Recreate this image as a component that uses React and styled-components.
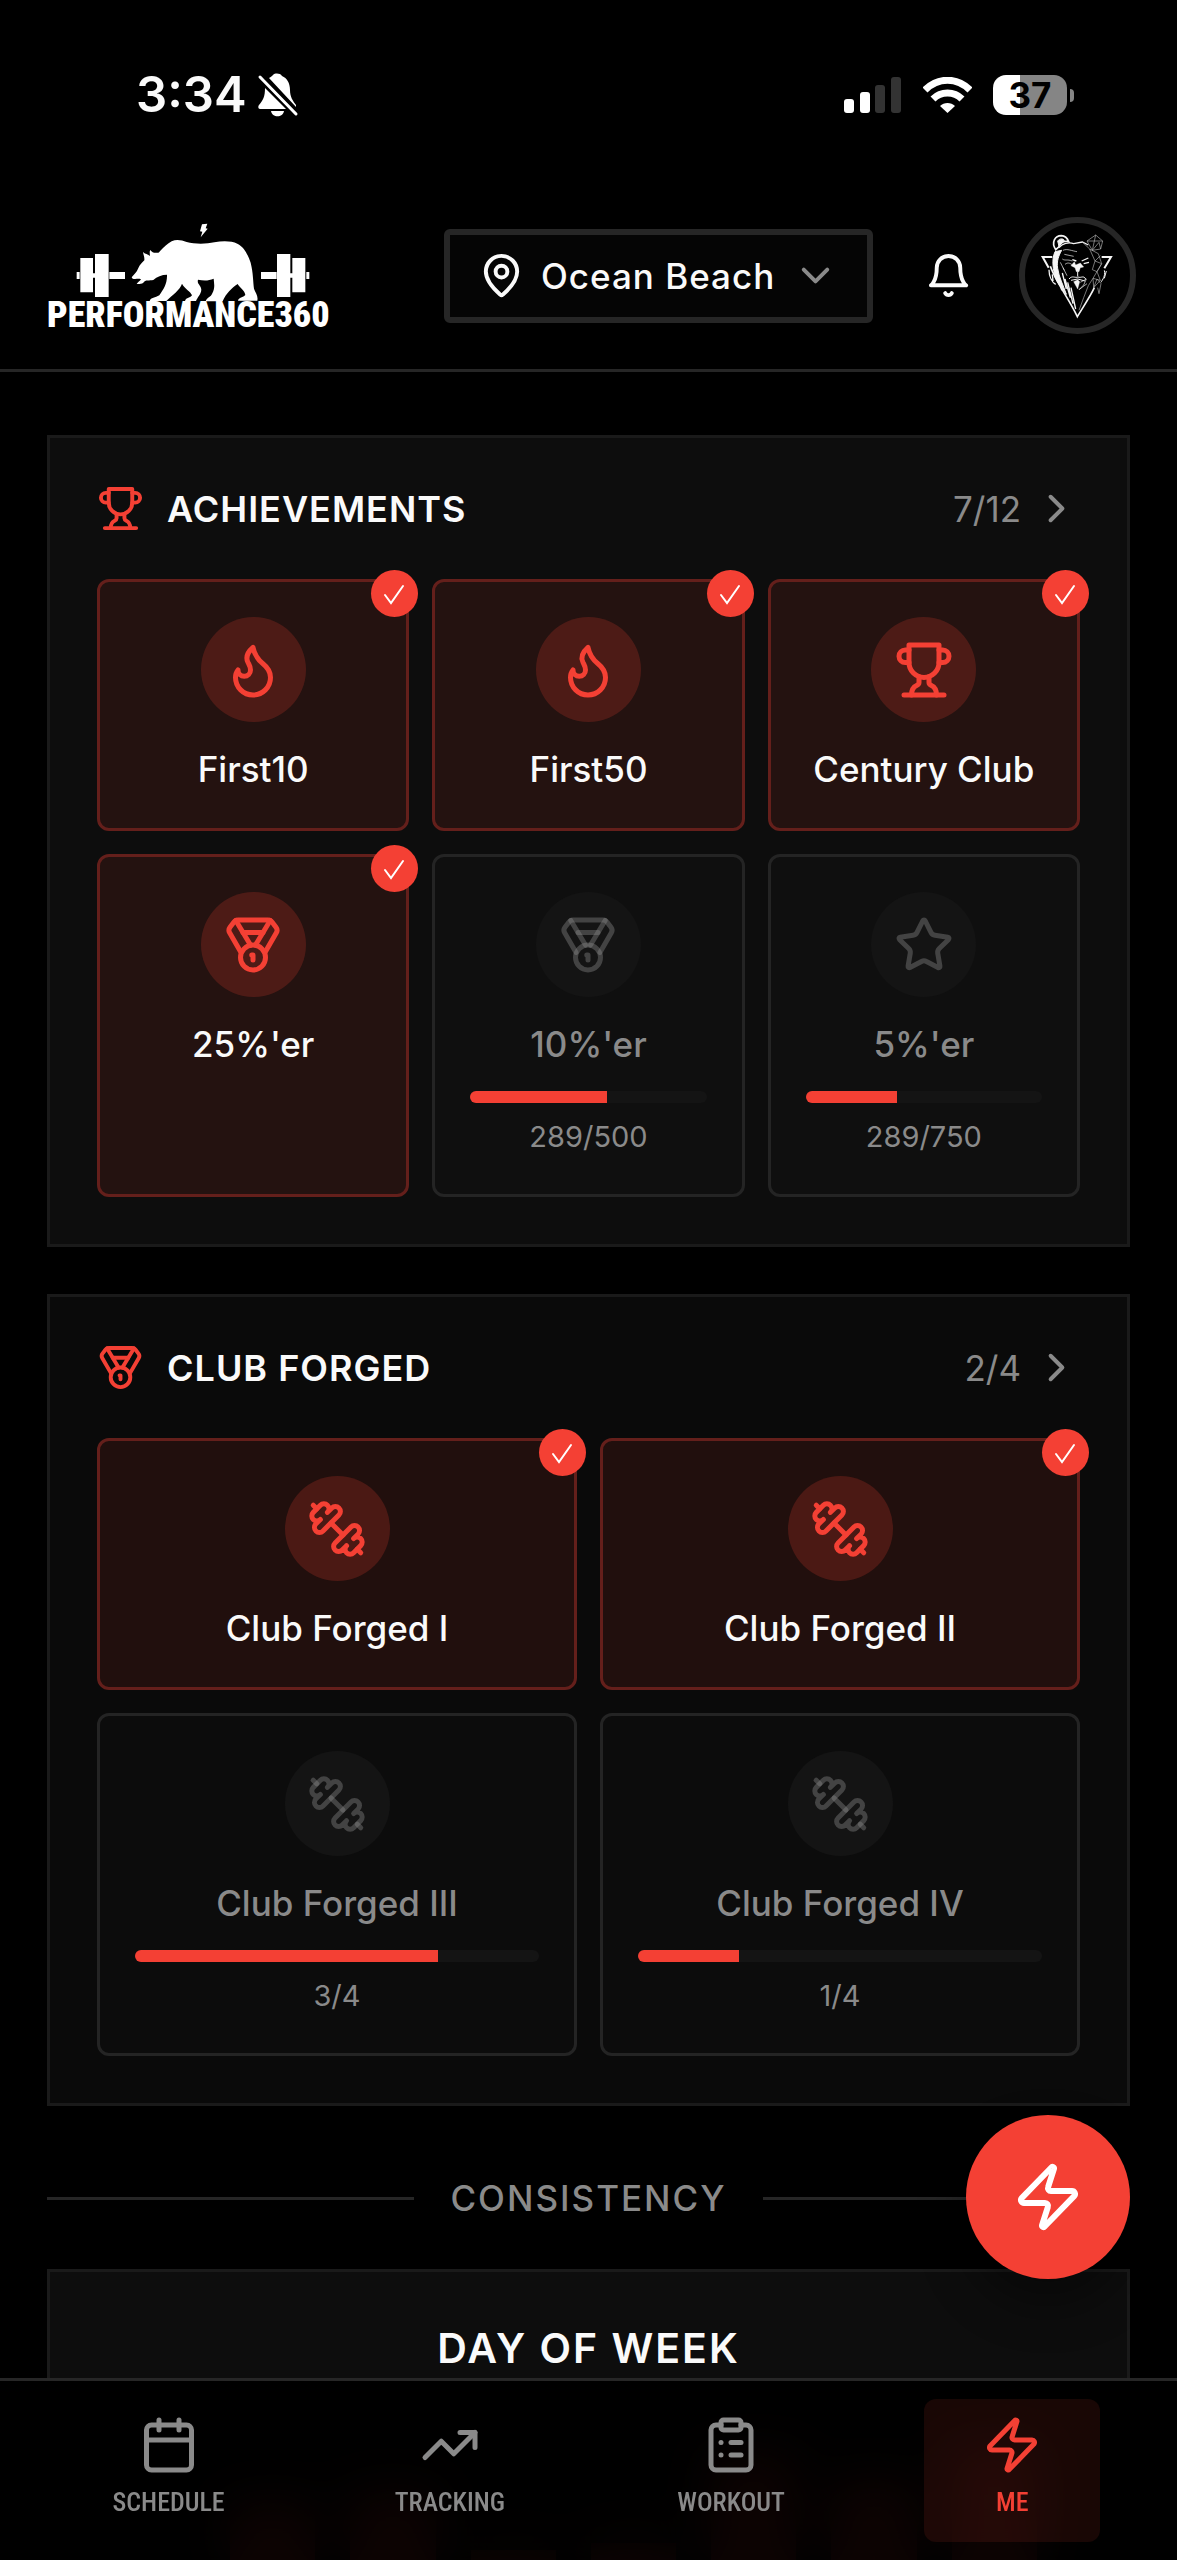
// Modules Import
import React from 'react';
import styled, { createGlobalStyle } from "styled-components"


const GlobalStyle = createGlobalStyle`
  * {
    box-sizing: border-box;
  }
  body {
    margin: 0;
    background-color: #000000;
    color: #fafafa;
    font-family: Inter, "Noto Sans", sans-serif;
  }
  button, select {
    font: inherit;
    color: inherit;
    background: none;
    border: 0;
    padding: 0;
    margin: 0;
  }
`

const Screen = styled.div`
  display: flex;
  flex-direction: column;
  height: 100vh;
  overflow: hidden;
`

/* Status bar */
const StatusBar = styled.div`
  display: flex;
  justify-content: space-between;
  align-items: center;
  height: 190px;
  padding: 0 103px 0 136px;
`
const StatusGroup = styled.div`
  display: flex;
  align-items: center;
  gap: ${props => props.$gap}px;
`
const Clock = styled.span`
  font-size: 49px;
  font-weight: 600;
  line-height: 60px;
`
const Battery = styled.div`
  display: flex;
  align-items: center;
  gap: 3px;
`
const BatteryBody = styled.div`
  display: flex;
  align-items: center;
  justify-content: center;
  width: 74px;
  height: 40px;
  border-radius: 13px;
  background: linear-gradient(to right, #ffffff 37%, #858585 37%);
  color: #000000;
  font-size: 35px;
  font-weight: 700;
`
const BatteryTip = styled.div`
  width: 4px;
  height: 13px;
  border-radius: 0 4px 4px 0;
  background-color: #858585;
`

/* Header */
const Header = styled.header`
  flex: none;
  border-bottom: 3px solid #262626;
`
const HeaderRow = styled.div`
  display: flex;
  justify-content: space-between;
  align-items: center;
  padding: 27px 41px 35px 47px;
`
const HeaderActions = styled.div`
  display: flex;
  align-items: center;
  gap: 47px;
`
const Logo = styled.a`
  display: flex;
  flex-direction: column;
  color: #ffffff;
  text-decoration: none;
`
const LogoName = styled.span`
  font-family: "Roboto Condensed", "Liberation Sans Narrow", sans-serif;
  font-size: 36px;
  font-weight: 900;
  line-height: 26px;
`
const LocationPicker = styled.label`
  display: flex;
  align-items: center;
  gap: 16px;
  height: 94px;
  margin-right: 5px;
  padding: 0 28px;
  border: 6px solid #262626;
  border-radius: 6px;
  background-color: #050505;
`
const LocationSelect = styled.select`
  appearance: none;
  font-size: 35px;
  font-weight: 500;
  letter-spacing: 1px;
  outline: none;
`
const IconButton = styled.button`
  display: flex;
`
const Avatar = styled.button`
  display: flex;
  width: 117px;
  height: 117px;
  border: 6px solid #262626;
  border-radius: 50%;
`

/* Content */
const Main = styled.main`
  display: flex;
  flex-direction: column;
  padding: 63px 47px 0;
`
const Card = styled.section`
  flex: none;
  margin-bottom: 47px;
  padding: 47px;
  border: 3px solid #1a1a1a;
  background-color: ${props => props.$dim ? "#0a0a0a" : "#0d0d0d"};
`
const CardHeader = styled.div`
  display: flex;
  align-items: center;
  height: 47px;
  margin-bottom: 47px;
`
const CardTitle = styled.h2`
  flex: 1;
  margin: 0 0 0 23px;
  font-size: 36px;
  font-weight: 600;
  letter-spacing: 1px;
`
const CardCount = styled.button`
  display: flex;
  align-items: center;
  gap: 12px;
  color: #8a8a8a;
  font-size: 35px;
`
const TileGrid = styled.div`
  display: grid;
  grid-template-columns: repeat(${props => props.$columns}, 1fr);
  gap: 23px;
`
const Tile = styled.div`
  position: relative;
  display: flex;
  flex-direction: column;
  align-items: center;
  padding: 35px;
  border: 3px solid ${props => props.$earned ? "#641f1b" : "#242424"};
  border-radius: 12px;
  background-color: ${props => props.$earned ? "rgba(244, 64, 52, 0.1)" : "rgba(255, 255, 255, 0.01)"};
`
const TileIcon = styled.div`
  display: flex;
  align-items: center;
  justify-content: center;
  width: 105px;
  height: 105px;
  border-radius: 50%;
  color: ${props => props.$earned ? "#f44034" : "rgba(138, 138, 138, 0.4)"};
  background-color: ${props => props.$earned ? "rgba(244, 64, 52, 0.2)" : "#141414"};
`
const TileName = styled.div`
  margin-top: 23px;
  color: ${props => props.$earned ? "#fafafa" : "#8a8a8a"};
  font-size: 35px;
  font-weight: 500;
  line-height: 48px;
`
const Track = styled.div`
  width: 100%;
  height: 12px;
  margin-top: 23px;
  border-radius: 6px;
  background-color: #141414;
  overflow: hidden;
`
const Fill = styled.div`
  height: 100%;
  background-color: #f44034;
`
const TileCount = styled.div`
  margin-top: 12px;
  color: #8a8a8a;
  font-size: 29px;
  line-height: 44px;
`
const Badge = styled.div`
  position: absolute;
  top: -12px;
  right: -12px;
  display: flex;
  width: 47px;
  height: 47px;
  border-radius: 50%;
  background-color: #f44034;
`
const Divider = styled.div`
  display: flex;
  align-items: center;
  gap: 36px;
  margin: 21px 0 47px;
  color: #8a8a8a;
  font-size: 35px;
  font-weight: 500;
  line-height: 48px;
  letter-spacing: 2px;

  &::before, &::after {
    content: "";
    flex: 1;
    height: 3px;
    background-color: #262626;
  }
`
const ChartTitle = styled.h3`
  margin: 0;
  text-align: center;
  font-size: 41px;
  font-weight: 600;
  line-height: 58px;
  letter-spacing: 2px;
`
const Chart = styled.div`
  display: flex;
  align-items: flex-end;
  gap: 35px;
  height: 360px;
  padding: 0 43px 0 133px;
`
const ChartBar = styled.div`
  flex: 1;
  background-color: #f44034;
`

/* Floating action + bottom tabs */
const QuickAction = styled.button`
  position: fixed;
  right: 47px;
  bottom: 281px;
  display: flex;
  align-items: center;
  justify-content: center;
  width: 164px;
  height: 164px;
  border-radius: 50%;
  background-color: #f44034;
  color: #ffffff;
  box-shadow: 0 24px 48px rgba(0, 0, 0, 0.4);
`
const TabBar = styled.nav`
  position: fixed;
  left: 0;
  right: 0;
  bottom: 0;
  display: grid;
  grid-template-columns: repeat(4, 1fr);
  justify-items: center;
  padding: 18px 24px 18px 28px;
  border-top: 3px solid #262626;
  background-color: rgba(0, 0, 0, 0.95);
  backdrop-filter: blur(24px);
`
const Tab = styled.a`
  display: flex;
  flex-direction: column;
  align-items: center;
  gap: 9px;
  width: 176px;
  padding: 16px 0 22px;
  border-radius: 12px;
  background-color: ${props => props.$active ? "rgba(244, 64, 52, 0.1)" : "transparent"};
  color: ${props => props.$active ? "#f44034" : "#8a8a8a"};
  font-family: "Roboto Condensed", "Liberation Sans Narrow", sans-serif;
  font-size: 26px;
  font-weight: 500;
  line-height: 36px;
  text-decoration: none;
`

const icons = {
  trophy: [
    "M6 9H4.5a2.5 2.5 0 0 1 0-5H6",
    "M18 9h1.5a2.5 2.5 0 0 0 0-5H18",
    "M4 22h16",
    "M10 14.66V17c0 .55-.47.98-.97 1.21C7.85 18.75 7 20.24 7 22",
    "M14 14.66V17c0 .55.47.98.97 1.21C16.15 18.75 17 20.24 17 22",
    "M18 2H6v7a6 6 0 0 0 12 0V2Z",
  ],
  medal: [
    "M7.21 15 2.66 7.14a2 2 0 0 1 .13-2.2L4.4 2.8A2 2 0 0 1 6 2h12a2 2 0 0 1 1.6.8l1.6 2.14a2 2 0 0 1 .14 2.2L16.79 15",
    "M11 12 5.12 2.2",
    "m13 12 5.88-9.8",
    "M8 7h8",
    "M7 17a5 5 0 1 0 10 0a5 5 0 1 0-10 0",
    "M12 18v-2h-.5",
  ],
  flame: [
    "M8.5 14.5A2.5 2.5 0 0 0 11 12c0-1.38-.5-2-1-3-1.072-2.143-.224-4.054 2-6 .5 2.5 2 4.9 4 6.5 2 1.6 3 3.5 3 5.5a7 7 0 1 1-14 0c0-1.153.433-2.294 1-3a2.5 2.5 0 0 0 2.5 2.5z",
  ],
  star: [
    "M11.525 2.295a.53.53 0 0 1 .95 0l2.31 4.679a2.123 2.123 0 0 0 1.595 1.16l5.166.756a.53.53 0 0 1 .294.904l-3.736 3.638a2.123 2.123 0 0 0-.611 1.878l.882 5.14a.53.53 0 0 1-.771.56l-4.618-2.428a2.122 2.122 0 0 0-1.973 0L6.396 21.01a.53.53 0 0 1-.77-.56l.881-5.139a2.122 2.122 0 0 0-.611-1.879L2.16 9.795a.53.53 0 0 1 .294-.906l5.165-.755a2.122 2.122 0 0 0 1.597-1.16z",
  ],
  dumbbell: [
    "M14.4 14.4 9.6 9.6",
    "M18.657 21.485a2 2 0 1 1-2.829-2.828l-1.767 1.768a2 2 0 1 1-2.829-2.829l6.364-6.364a2 2 0 1 1 2.829 2.829l-1.768 1.767a2 2 0 1 1 2.828 2.829z",
    "m21.5 21.5-1.4-1.4",
    "M3.9 3.9 2.5 2.5",
    "M6.404 12.768a2 2 0 1 1-2.829-2.829l1.768-1.767a2 2 0 1 1-2.828-2.829l2.828-2.828a2 2 0 1 1 2.829 2.828l1.767-1.768a2 2 0 1 1 2.829 2.829z",
  ],
  zap: [
    "M4 14a1 1 0 0 1-.78-1.63l9.9-10.2a.5.5 0 0 1 .86.46l-1.92 6.02A1 1 0 0 0 13 10h7a1 1 0 0 1 .78 1.63l-9.9 10.2a.5.5 0 0 1-.86-.46l1.92-6.02A1 1 0 0 0 11 14z",
  ],
  pin: [
    "M20 10c0 4.993-5.539 10.193-7.399 11.799a1 1 0 0 1-1.202 0C9.539 20.193 4 14.993 4 10a8 8 0 0 1 16 0",
    "M9 10a3 3 0 1 0 6 0a3 3 0 1 0-6 0",
  ],
  bell: [
    "M6 8a6 6 0 0 1 12 0c0 7 3 9 3 9H3s3-2 3-9",
    "M10.3 21a1.94 1.94 0 0 0 3.4 0",
  ],
  chevronDown: ["m6 9 6 6 6-6"],
  chevronRight: ["m9 18 6-6-6-6"],
  calendar: [
    "M8 2v4",
    "M16 2v4",
    "M5 4h14a2 2 0 0 1 2 2v14a2 2 0 0 1-2 2H5a2 2 0 0 1-2-2V6a2 2 0 0 1 2-2z",
    "M3 10h18",
  ],
  trending: ["m22 7-8.5 8.5-5-5L2 17", "M16 7h6v6"],
  clipboard: [
    "M9 2h6a1 1 0 0 1 1 1v2a1 1 0 0 1-1 1H9a1 1 0 0 1-1-1V3a1 1 0 0 1 1-1z",
    "M16 4h2a2 2 0 0 1 2 2v14a2 2 0 0 1-2 2H6a2 2 0 0 1-2-2V6a2 2 0 0 1 2-2h2",
    "M12 11h4",
    "M12 16h4",
    "M8 11h.01",
    "M8 16h.01",
  ],
}

const Icon = ({ name, size = 47, color = "currentColor" }) => (
  <svg width={size} height={size} viewBox="0 0 24 24" fill="none" stroke={color} strokeWidth="2" strokeLinecap="round" strokeLinejoin="round" aria-hidden="true">
    {icons[name].map(d => <path key={d} d={d} />)}
  </svg>
)

const BearLogo = () => (
  <svg width="291" height="79" viewBox="51 39 873 237" fill="#ffffff" aria-hidden="true">
    <path d="M516 43L532 41L527 55L533 56L512 82L517 65L510 64Z" />
    <path d="M305 202C312 192 320 188 324 176C330 163 336 158 343 151C344 141 340 134 339 126C347 134 353 131 359 138C361 132 357 126 361 120C366 128 374 129 380 128C385 130 388 126 391 122C402 112 412 101 425 94C440 87 455 91 470 96C495 103 530 102 553 97C580 92 605 93 622 101C643 111 654 135 662 158C670 190 669 215 672 236C676 248 685 256 682 272H624C626 262 640 262 646 255C644 240 630 234 623 222C605 234 588 250 578 274H527C530 262 543 262 547 250C556 232 552 220 551 206C535 213 520 212 504 209C500 222 514 226 514 239C513 253 502 262 498 273H465C468 262 482 264 486 256C482 244 463 236 456 221C450 240 428 254 409 273H359C362 262 376 264 388 256C400 238 412 222 411 194C395 194 381 200 370 210C358 213 346 208 340 218C334 222 326 223 320 222C323 216 330 214 333 208C325 204 318 209 308 206Z" />
    <path d="M140 186h9v21h-9zM151 144h38v103h-38zM189 190h6v13h-6zM195 132h41v129h-41zM238 186h47v21h-47z" />
    <path d="M693 186h47v21h-47zM741 132h40v129h-40zM781 190h6v13h-6zM787 144h39v103h-39zM829 186h9v21h-9z" />
  </svg>
)

const BearAvatar = () => (
  <svg width="105" height="105" viewBox="46 38 315 315" fill="none" stroke="#f5f5f5" strokeWidth="3" aria-hidden="true">
    <path d="M128 140H99L117 172M276 140H304L284 174" strokeWidth="6" />
    <path d="M122 168C140 218 176 262 203 319C220 290 240 262 254 232" strokeWidth="5" />
    <path d="M138 118C124 96 136 76 155 76C168 77 174 86 177 94C166 90 152 96 147 110Z" strokeWidth="5" />
    <path d="M144 92C150 84 160 84 164 90L148 108Z" fill="#f5f5f5" />
    <path d="M148 112C158 100 176 94 192 100L218 95L236 104" strokeWidth="4" />
    <path d="M136 124C124 150 132 180 136 200C144 222 160 236 170 252C160 222 148 202 144 174C140 152 148 134 156 120Z" fill="#f5f5f5" />
    <path d="M118 178C118 200 128 216 138 222M128 192L130 212M150 208L156 240M158 188L170 236M166 206L182 262M174 216L190 280M184 232L198 296" strokeWidth="4" />
    <path d="M160 120C172 114 188 122 202 124M164 132L192 138M158 146C166 152 172 146 188 152M166 162C176 154 184 160 190 166M152 156L164 180M160 172L172 196" strokeWidth="2" />
    <path d="M188 148L200 152M216 152L236 143M222 160L238 156" strokeWidth="4" />
    <path d="M184 166L194 154L198 164L212 158L222 170L212 172L208 184L200 184L196 172Z" fill="#f5f5f5" strokeWidth="1" />
    <path d="M204 184V198M178 206C188 194 196 204 205 200C214 204 222 194 228 206M184 210L204 206L226 212" />
    <path d="M192 214L204 208L210 214L204 236Z" fill="#f5f5f5" strokeWidth="1" />
    <path d="M212 216L230 206L222 224L208 238L232 220" strokeWidth="2" />
    <g stroke="#b0b0b0" strokeWidth="2">
      <path d="M232 92L258 74L279 92L273 116L248 120ZM232 92L279 92M258 74L248 120L268 96L273 116" />
      <path d="M218 95L240 116L266 130L276 160L262 184L272 210L252 232L250 204L236 226L222 262L208 300M240 116L256 152L276 160L250 204L272 210M256 152L248 178L262 184M272 136L256 152M252 232L262 206L274 220L268 250L264 232" />
    </g>
    <path d="M284 180C288 198 278 208 274 216M290 182L284 204" />
  </svg>
)

const Check = () => (
  <svg width="47" height="47" viewBox="0 0 47 47" fill="none" stroke="#ffffff" strokeWidth="2" strokeLinecap="round" aria-hidden="true">
    <path d="M14 25L20 33L32 16" />
  </svg>
)

const achievements = [
  { name: "First10", icon: "flame" },
  { name: "First50", icon: "flame" },
  { name: "Century Club", icon: "trophy" },
  { name: "25%'er", icon: "medal" },
  { name: "10%'er", icon: "medal", done: 289, goal: 500 },
  { name: "5%'er", icon: "star", done: 289, goal: 750 },
]

const clubs = [
  { name: "Club Forged I", icon: "dumbbell" },
  { name: "Club Forged II", icon: "dumbbell" },
  { name: "Club Forged III", icon: "dumbbell", done: 3, goal: 4 },
  { name: "Club Forged IV", icon: "dumbbell", done: 1, goal: 4 },
]

const tabs = [
  { name: "SCHEDULE", icon: "calendar" },
  { name: "TRACKING", icon: "trending" },
  { name: "WORKOUT", icon: "clipboard" },
  { name: "ME", icon: "zap", active: true },
]

const weekday = [65, 68, 52, 54, 78, 71, 81]

const AwardTile = ({ name, icon, done, goal }) => {
  const earned = !goal;
  return (
    <Tile $earned={earned}>
      {earned && <Badge><Check /></Badge>}
      <TileIcon $earned={earned}><Icon name={icon} size={60} /></TileIcon>
      <TileName $earned={earned}>{name}</TileName>
      {!earned && (
        <>
          <Track><Fill style={{ width: `${(done / goal) * 100}%` }} /></Track>
          <TileCount>{`${done}/${goal}`}</TileCount>
        </>
      )}
    </Tile>
  );
}

const AwardCard = ({ title, icon, count, columns, items, dim }) => (
  <Card $dim={dim}>
    <CardHeader>
      <Icon name={icon} color="#f44034" />
      <CardTitle>{title}</CardTitle>
      <CardCount>{count}<Icon name="chevronRight" /></CardCount>
    </CardHeader>
    <TileGrid $columns={columns}>
      {items.map(item => <AwardTile key={item.name} {...item} />)}
    </TileGrid>
  </Card>
)

const App = () => (
  <Screen>
    <GlobalStyle />
    <Header>
      <StatusBar>
        <StatusGroup $gap={10}>
          <Clock>3:34</Clock>
          <svg width="42" height="44" viewBox="0 0 42 44" fill="#ffffff" aria-hidden="true">
            <path d="M12 5C14 4 15 3 16 2C18 0 23 0 25 3C30 5 33 10 33 17C33 24 36 28 39 32V34Z" />
            <path d="M8 15L29 36H3C1 36 1 33 2 32C6 27 8 24 8 15Z" />
            <path d="M14 38H27C26 45 15 45 14 38Z" />
            <path d="M3 4L39 41" stroke="#ffffff" strokeWidth="3" strokeLinecap="round" />
          </svg>
        </StatusGroup>
        <StatusGroup $gap={21}>
          <svg width="58" height="36" viewBox="0 0 58 36" fill="#ffffff" aria-hidden="true">
            <rect x="0" y="22" width="10" height="14" rx="3" />
            <rect x="16" y="15" width="10" height="21" rx="3" />
            <rect x="31" y="8" width="10" height="28" rx="3" fill="#333333" />
            <rect x="47" y="0" width="10" height="36" rx="3" fill="#333333" />
          </svg>
          <svg width="49" height="36" viewBox="0 0 49 36" fill="none" stroke="#ffffff" strokeWidth="7" aria-hidden="true">
            <path d="M2 13C15 0 34 0 47 13" />
            <path d="M10 22C18 14 31 14 39 22" />
            <path d="M17 29C21 25 28 25 32 29L24.500 36Z" fill="#ffffff" stroke="none" />
          </svg>
          <Battery>
            <BatteryBody>37</BatteryBody>
            <BatteryTip />
          </Battery>
        </StatusGroup>
      </StatusBar>
      <HeaderRow>
        <Logo href="#home">
          <BearLogo />
          <LogoName>PERFORMANCE360</LogoName>
        </Logo>
        <HeaderActions>
          <LocationPicker>
            <Icon name="pin" />
            <LocationSelect aria-label="Location">
              <option>Ocean Beach</option>
            </LocationSelect>
            <Icon name="chevronDown" color="#8a8a8a" />
          </LocationPicker>
          <IconButton aria-label="Notifications"><Icon name="bell" /></IconButton>
          <Avatar aria-label="Profile"><BearAvatar /></Avatar>
        </HeaderActions>
      </HeaderRow>
    </Header>
    <Main>
      <AwardCard title="ACHIEVEMENTS" icon="trophy" count="7/12" columns={3} items={achievements} />
      <AwardCard title="CLUB FORGED" icon="medal" count="2/4" columns={2} items={clubs} dim />
      <Divider>CONSISTENCY</Divider>
      <Card>
        <ChartTitle>DAY OF WEEK</ChartTitle>
        <Chart>
          {weekday.map((value, day) => <ChartBar key={day} style={{ height: `${value}%` }} />)}
        </Chart>
      </Card>
    </Main>
    <QuickAction aria-label="Quick action"><Icon name="zap" size={72} /></QuickAction>
    <TabBar>
      {tabs.map(({ name, icon, active }) => (
        <Tab key={name} href={`#${name.toLowerCase()}`} $active={active}>
          <Icon name={icon} size={60} />
          {name}
        </Tab>
      ))}
    </TabBar>
  </Screen>
)

export default App;
